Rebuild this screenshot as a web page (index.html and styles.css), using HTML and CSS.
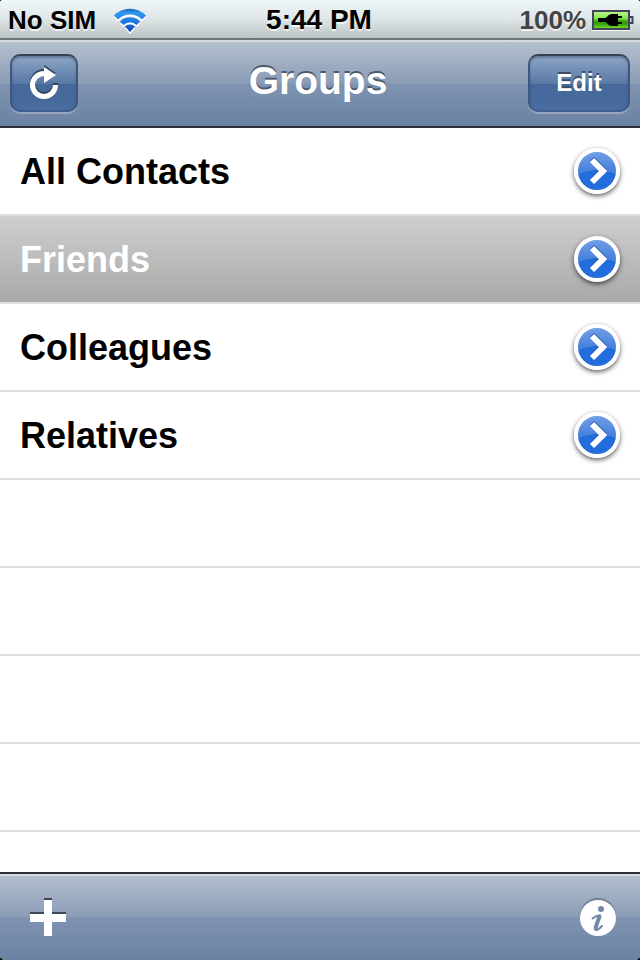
FILE: index.html
```html
<!DOCTYPE html>
<html lang="en">
<head>
    <meta charset="UTF-8">
    <meta name="viewport" content="width=device-width, initial-scale=1.0">
    <title>Groups</title>
    <link rel="stylesheet" href="styles.css">
</head>
<body>

<!-- Status bar -->
<div class="status-bar">
    <div class="status-left">
        <span>No SIM</span>
        <svg width="34" height="28" viewBox="0 0 34 28" aria-hidden="true">
            <defs>
                <linearGradient id="wifi-blue" gradientUnits="userSpaceOnUse" x1="0" y1="2" x2="0" y2="27">
                    <stop offset="0" stop-color="#1a54b8"/>
                    <stop offset="0.2" stop-color="#2f9bf0"/>
                    <stop offset="0.5" stop-color="#1b7be6"/>
                    <stop offset="1" stop-color="#0a40bc"/>
                </linearGradient>
            </defs>
            <g fill="#fff" transform="translate(0 2)">
                <path d="M1 9.500A22.500 22.500 0 0 1 33 9.500L29 13.500A17 17 0 0 0 5 13.500Z"/>
                <path d="M7 15.500A14 14 0 0 1 27 15.500L23.500 19A9.200 9.200 0 0 0 10.500 19Z"/>
                <path d="M12 20.500A7 7 0 0 1 22 20.500L17 26Z"/>
            </g>
            <g fill="url(#wifi-blue)">
                <path d="M1 9.500A22.500 22.500 0 0 1 33 9.500L29 13.500A17 17 0 0 0 5 13.500Z"/>
                <path d="M7 15.500A14 14 0 0 1 27 15.500L23.500 19A9.200 9.200 0 0 0 10.500 19Z"/>
                <path d="M12 20.500A7 7 0 0 1 22 20.500L17 26Z"/>
            </g>
        </svg>
    </div>
    <div class="status-time">5:44 PM</div>
    <div class="status-right">
        <span>100%</span>
        <svg width="42" height="22" viewBox="0 0 42 22" aria-hidden="true">
            <defs>
                <linearGradient id="battery-green" x1="0" y1="0" x2="0" y2="1">
                    <stop offset="0" stop-color="#c4f49c"/>
                    <stop offset="0.4" stop-color="#86e848"/>
                    <stop offset="0.6" stop-color="#2f9808"/>
                    <stop offset="0.75" stop-color="#38a80c"/>
                    <stop offset="1" stop-color="#80ea34"/>
                </linearGradient>
            </defs>
            <rect x="0" y="20" width="38" height="2" fill="#f4f7f8"/>
            <rect x="1" y="2" width="36" height="18" fill="url(#battery-green)" stroke="#41445a" stroke-width="2"/>
            <path d="M38 8h2.500v6H38" fill="#d5dadb" stroke="#41445a" stroke-width="2"/>
            <path d="M6 9h7c2 0 3-4 7-4h6v2h4v2h-4v4h4v2h-4v2h-6c-4 0-5-4-7-4H6z" fill="#000"/>
        </svg>
    </div>
</div>

<!-- Navigation bar -->
<header class="nav-bar">
    <button class="nav-button refresh" type="button" aria-label="Refresh">
        <svg width="30" height="38" viewBox="0 0 30 38" aria-hidden="true">
            <g fill="#34455f" stroke="#34455f" transform="translate(0 -2)">
                <path d="M15 9.500A11.500 11.500 0 1 0 26.500 21" fill="none" stroke-width="5"/>
                <path d="M15 3l12 8-12 8z" stroke="none"/>
            </g>
            <path d="M15 9.500A11.500 11.500 0 1 0 26.500 21" fill="none" stroke="#fff" stroke-width="5"/>
            <path d="M15 3l12 8-12 8z" fill="#fff"/>
        </svg>
    </button>
    <h1>Groups</h1>
    <button class="nav-button edit" type="button">Edit</button>
</header>

<!-- Group list -->
<main class="list">
    <div class="row">
        <span>All Contacts</span>
        <button class="detail" type="button" aria-label="All Contacts details">
            <svg width="20" height="28" viewBox="0 0 20 28" aria-hidden="true"><path d="M3 3l11 11L3 25" fill="none" stroke="#1b4fa8" stroke-width="6" transform="translate(0 -1)"/><path d="M3 3l11 11L3 25" fill="none" stroke="#fff" stroke-width="6"/></svg>
        </button>
    </div>
    <div class="row selected">
        <span>Friends</span>
        <button class="detail" type="button" aria-label="Friends details">
            <svg width="20" height="28" viewBox="0 0 20 28" aria-hidden="true"><path d="M3 3l11 11L3 25" fill="none" stroke="#1b4fa8" stroke-width="6" transform="translate(0 -1)"/><path d="M3 3l11 11L3 25" fill="none" stroke="#fff" stroke-width="6"/></svg>
        </button>
    </div>
    <div class="row">
        <span>Colleagues</span>
        <button class="detail" type="button" aria-label="Colleagues details">
            <svg width="20" height="28" viewBox="0 0 20 28" aria-hidden="true"><path d="M3 3l11 11L3 25" fill="none" stroke="#1b4fa8" stroke-width="6" transform="translate(0 -1)"/><path d="M3 3l11 11L3 25" fill="none" stroke="#fff" stroke-width="6"/></svg>
        </button>
    </div>
    <div class="row">
        <span>Relatives</span>
        <button class="detail" type="button" aria-label="Relatives details">
            <svg width="20" height="28" viewBox="0 0 20 28" aria-hidden="true"><path d="M3 3l11 11L3 25" fill="none" stroke="#1b4fa8" stroke-width="6" transform="translate(0 -1)"/><path d="M3 3l11 11L3 25" fill="none" stroke="#fff" stroke-width="6"/></svg>
        </button>
    </div>
    <div class="row"></div>
    <div class="row"></div>
    <div class="row"></div>
    <div class="row"></div>
</main>

<!-- Toolbar -->
<footer class="toolbar">
    <button class="tool" type="button" aria-label="Add group">
        <svg width="36" height="38" viewBox="0 0 36 38" aria-hidden="true">
            <path d="M14 0h8v14h14v8H22v14h-8V22H0v-8h14z" fill="#3b4658"/>
            <path d="M14 2h8v14h14v8H22v14h-8V24H0v-8h14z" fill="#fff"/>
        </svg>
    </button>
    <button class="tool" type="button" aria-label="Info">
        <svg width="36" height="38" viewBox="0 0 36 38" aria-hidden="true">
            <circle cx="18" cy="18" r="18" fill="#6f7f97"/>
            <circle cx="18" cy="20" r="18" fill="#fff"/>
            <circle cx="21" cy="11" r="3" fill="#7288a8"/>
            <path d="M12.500 20.500C15 18.500 17.500 17.500 19.500 17.500C18.500 22 15.500 28 15.200 30.500C15 33.500 18.500 32 22 28" fill="none" stroke="#7288a8" stroke-width="2" stroke-linecap="round"/>
            <path d="M19.500 18.500C18.500 22 16 27 15.700 30.500" fill="none" stroke="#7288a8" stroke-width="4" stroke-linecap="round"/>
        </svg>
    </button>
</footer>

</body>
</html>
```

FILE: styles.css
```css
* {
    box-sizing: border-box;
}
html {
    background: #000;
}
body {
    margin: 0;
    height: 100vh;
    display: flex;
    flex-direction: column;
    font-family: "Liberation Sans", Arial, sans-serif;
    font-weight: bold;
    background: #fff;
    border-radius: 3px 3px 5px 5px;
    overflow: clip;
}
button {
    font: inherit;
    color: inherit;
    border: none;
    padding: 0;
    cursor: pointer;
}
svg {
    display: block;
}

/* Status bar */
.status-bar {
    flex: none;
    height: 40px;
    display: grid;
    grid-template-columns: 1fr auto 1fr;
    align-items: center;
    padding: 0 6px 0 8px;
    font-size: 26px;
    line-height: 40px;
    color: #000;
    background: linear-gradient(#f0f7fa, #dfe6e8 50%, #bcc3c4);
    border-bottom: 2px solid #6b7677;
    text-shadow: 0 2px 0 rgba(255, 255, 255, 0.7);
}
.status-left,
.status-right {
    display: flex;
    align-items: center;
}
.status-left {
    gap: 17px;
}
.status-right {
    justify-content: flex-end;
    gap: 6px;
    color: #434343;
}
.status-time {
    padding-right: 4px;
    font-size: 28px;
}

/* Navigation bar */
.nav-bar {
    flex: none;
    height: 88px;
    display: grid;
    grid-template-columns: 1fr auto 1fr;
    align-items: center;
    padding: 0 10px 2px;
    color: #fff;
    background: linear-gradient(#b4c0ce, #8a9bb5 50%, #7f94b2 50%, #6c82a3);
    border-top: 2px solid #d3d9df;
    border-bottom: 2px solid #2d3033;
}
h1 {
    margin: 0;
    padding: 0 4px 4px 0;
    font-size: 39px;
    line-height: 48px;
    text-shadow: 0 -2px 0 #4c596d;
}
.nav-button {
    height: 58px;
    border: 2px solid;
    border-color: #364152 #40587e #405f91;
    border-radius: 10px;
    background: linear-gradient(#8ea6c5, #5877a5 52%, #456799 52%, #4a6da1);
    box-shadow: 0 2px 0 rgba(255, 255, 255, 0.25), inset 0 2px 2px rgba(30, 45, 75, 0.35);
}
.refresh {
    width: 68px;
    display: flex;
    align-items: center;
    justify-content: center;
}
.edit {
    justify-self: end;
    width: 102px;
    font-size: 24px;
    text-shadow: 0 -2px 0 #3b4c68;
}

/* Group list */
.list {
    flex: 1;
    min-height: 0;
    overflow: hidden;
}
.row {
    height: 88px;
    display: flex;
    align-items: center;
    justify-content: space-between;
    padding: 0 20px;
    font-size: 36px;
    color: #000;
    border-bottom: 2px solid #e0e0e0;
}
.row span {
    padding-top: 2px;
}
.selected {
    color: #fff;
    background: linear-gradient(#cfcfcf, #a9a9a9) padding-box;
}
.detail {
    width: 46px;
    height: 46px;
    display: flex;
    align-items: center;
    justify-content: center;
    padding-left: 4px;
    border: 4px solid #fff;
    border-radius: 50%;
    background: radial-gradient(ellipse 34px 24px at 50% 100%, #226ddb 98%, transparent 100%), linear-gradient(#79a4e6, #3d7bdc 60%);
    background-origin: border-box;
    box-shadow: 0 2px 5px rgba(0, 0, 0, 0.65);
}

/* Toolbar */
.toolbar {
    flex: none;
    height: 88px;
    display: flex;
    align-items: center;
    justify-content: space-between;
    padding: 0 24px 0 30px;
    background: linear-gradient(#b4c0ce, #8a9bb5 50%, #7f94b2 50%, #6c82a3);
    border-top: 2px solid #2d3033;
    box-shadow: inset 0 2px 0 #d8dde2;
}
.tool {
    background: none;
}
```
